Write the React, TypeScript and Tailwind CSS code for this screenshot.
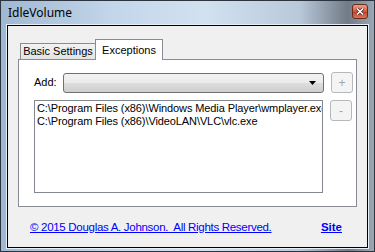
import React from 'react';

const files = [
  'C:\\Program Files (x86)\\Windows Media Player\\wmplayer.exe',
  'C:\\Program Files (x86)\\VideoLAN\\VLC\\vlc.exe',
];

const SideButton: React.FC<{ label: string }> = ({ label }) => (
  <button
    disabled
    className="w-[22px] h-[21px] shrink-0 rounded-[3px] border border-[#b5b9bd] bg-[#f4f4f4] text-[#a3a3a3] text-[12px] leading-none flex items-center justify-center"
  >
    {label}
  </button>
);

export default function App() {
  return (
    <div
      className="w-[375px] h-[252px] flex flex-col border border-[#2c3440] bg-[linear-gradient(to_right,#9fb8d2_0%,#c3d6ea_30%,#d2e1f0_55%,#b9c9da_80%,#707b87_93%,#9aa7b4_100%)]"
      style={{ fontFamily: '"Liberation Sans", Arial, sans-serif' }}
    >
      {/* title bar */}
      <div className="h-[23px] shrink-0 flex items-center justify-between pl-[7px] pr-[6px]">
        <span className="text-[12px] text-black" style={{ fontFamily: '"Noto Sans", sans-serif' }}>
          IdleVolume
        </span>
        <div className="w-[16px] h-[15px] mb-[2px] rounded-[3px] border border-[#6b2a1c] bg-[linear-gradient(to_bottom,#e8a08c_0%,#d6624a_45%,#c24227_55%,#d7775d_100%)] flex items-center justify-center">
          <svg width="8" height="7" viewBox="0 0 8 7">
            <path d="M1 0.5 L7 6.5 M7 0.5 L1 6.5" stroke="#4a1a10" strokeWidth="3" />
            <path d="M1 0.5 L7 6.5 M7 0.5 L1 6.5" stroke="#fff" strokeWidth="1.6" />
          </svg>
        </div>
      </div>

      {/* client area */}
      <div className="flex-1 px-[5px] pb-[2px] flex">
        <div className="flex-1 border border-[#e8eef5] flex">
          <div className="flex-1 border border-black bg-[#f0f0f0] flex flex-col text-[11px] text-black">
            {/* tabs */}
            <div className="mt-[12px] ml-[10px] mr-[10px] flex flex-col">
              <div className="flex items-end h-[21px] pl-[2px]">
                <div className="h-[16px] w-[76px] border border-b-0 border-[#898c95] bg-[linear-gradient(to_bottom,#f2f2f2,#e3e3e3)] flex items-center justify-center">
                  Basic Settings
                </div>
                <div className="h-[21px] w-[68px] border border-b-0 border-[#898c95] bg-white flex items-center justify-center -mb-px relative z-10 -ml-px">
                  Exceptions
                </div>
              </div>
              <div className="h-[148px] border border-[#898c95] bg-white pl-[15px] pt-[12px] flex flex-col">
                <div className="flex items-center">
                  <span className="w-[29px]">Add:</span>
                  <div className="w-[261px] h-[20px] rounded-[3px] border border-[#707070] bg-[linear-gradient(to_bottom,#f2f2f2_0%,#ebebeb_50%,#dddddd_51%,#cfcfcf_100%)] flex items-center justify-end pr-[7px]">
                    <svg width="7" height="4" viewBox="0 0 7 4">
                      <path d="M0 0 H7 L3.5 4 Z" fill="#000" />
                    </svg>
                  </div>
                  <div className="ml-[7px]">
                    <SideButton label="+" />
                  </div>
                </div>
                <div className="flex mt-[7px]">
                  <div className="w-[289px] h-[93px] border border-[#828790] bg-white pl-[2px] pt-[1px] overflow-hidden whitespace-nowrap leading-[13px] tracking-[-0.1px]">
                    {files.map((f) => (
                      <div key={f}>{f}</div>
                    ))}
                  </div>
                  <div className="ml-[7px]">
                    <SideButton label="-" />
                  </div>
                </div>
              </div>
            </div>

            {/* footer */}
            <div className="mt-[12px] ml-[22px] mr-[25px] flex justify-between text-[11.5px]">
              <a href="#" className="text-[#0000ff] underline tracking-[-0.3px]">
                © 2015 Douglas A. Johnson.&nbsp; All Rights Reserved.
              </a>
              <a href="#" className="text-[#0000ff] underline font-bold">
                Site
              </a>
            </div>
          </div>
        </div>
      </div>
    </div>
  );
}
